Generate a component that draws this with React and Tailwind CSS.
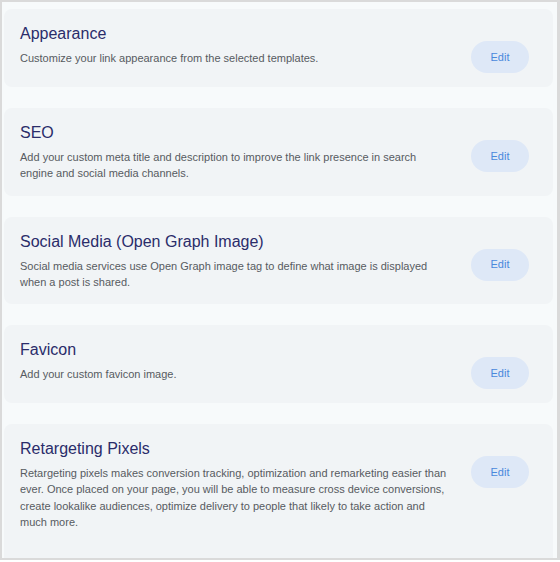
const sections = [
  {
    title: "Appearance",
    text: "Customize your link appearance from the selected templates.",
  },
  {
    title: "SEO",
    text: "Add your custom meta title and description to improve the link presence in search engine and social media channels.",
  },
  {
    title: "Social Media (Open Graph Image)",
    text: "Social media services use Open Graph image tag to define what image is displayed when a post is shared.",
  },
  {
    title: "Favicon",
    text: "Add your custom favicon image.",
  },
  {
    title: "Retargeting Pixels",
    text: "Retargeting pixels makes conversion tracking, optimization and remarketing easier than ever. Once placed on your page, you will be able to measure cross device conversions, create lookalike audiences, optimize delivery to people that likely to take action and much more.",
    last: true,
  },
];

function SettingCard({ title, text, last }) {
  return (
    <div
      className={`flex items-start justify-between rounded-lg bg-[#f1f4f6] pl-4 pr-6 pt-[15px] ${
        last ? "pb-[40px]" : "pb-[14px]"
      }`}
    >
      <div className="flex-1 min-w-0">
        <h2 className="text-[16px] leading-[20px] font-normal text-[#2a2c6a]">{title}</h2>
        <p className="mt-[6px] max-w-[428px] text-[11px] leading-[16.3px] text-[#575b61]">{text}</p>
      </div>
      <button className="mt-[17px] h-8 w-[58px] shrink-0 rounded-full bg-[#dee8f7] text-[11px] text-[#4a88dc]">
        Edit
      </button>
    </div>
  );
}

export default function App() {
  return (
    <div
      className="h-[560px] w-[560px] overflow-hidden border-2 border-r-[3px] border-[#dadada] bg-[#f7fafb]"
      style={{ fontFamily: '"Liberation Sans", Arial, sans-serif' }}
    >
      {/* Settings list */}
      <div className="flex flex-col gap-[21px] pl-[2px] pr-[4px] pt-[7px]">
        {sections.map((s) => (
          <SettingCard key={s.title} {...s} />
        ))}
      </div>
    </div>
  );
}
